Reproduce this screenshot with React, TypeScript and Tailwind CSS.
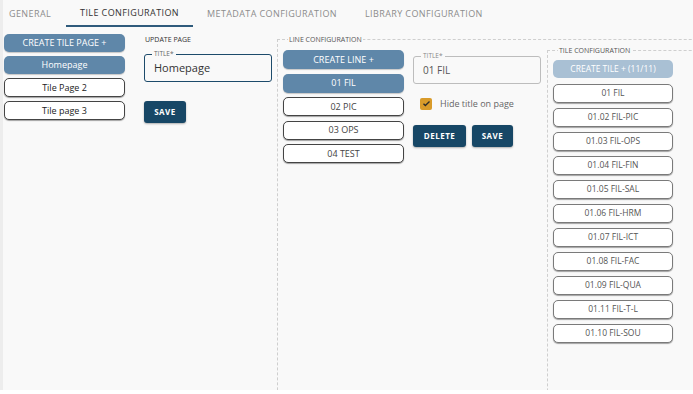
import React from "react";

const tabs = ["GENERAL", "TILE CONFIGURATION", "METADATA CONFIGURATION", "LIBRARY CONFIGURATION"];
const pages = ["Tile Page 2", "Tile page 3"];
const lines = ["02 PIC", "03 OPS", "04 TEST"];
const tiles = [
  "01 FIL",
  "01.02 FIL-PIC",
  "01.03 FIL-OPS",
  "01.04 FIL-FIN",
  "01.05 FIL-SAL",
  "01.06 FIL-HRM",
  "01.07 FIL-ICT",
  "01.08 FIL-FAC",
  "01.09 FIL-QUA",
  "01.11 FIL-T-L",
  "01.10 FIL-SOU",
];

const blueBtn =
  "flex items-center justify-center rounded-[5px] bg-[#5f87a9] text-white text-[9px] shadow-[0_1px_1px_rgba(0,0,0,0.2)]";
const whiteBtn =
  "flex items-center justify-center rounded-[5px] bg-white border border-[#444] shadow-[0_1px_1px_rgba(0,0,0,0.35)]";
const darkBtn =
  "flex items-center justify-center rounded-[3px] bg-[#174766] text-white text-[8px] font-bold tracking-[0.5px] shadow-[0_1px_2px_rgba(0,0,0,0.3)]";

const App: React.FC = () => {
  return (
    <div
      className="w-[693px] h-[394px] bg-white overflow-hidden"
      style={{ fontFamily: '"Open Sans", sans-serif' }}
    >
      <div className="h-[390px] bg-[#f9f9f9] border-l-[3px] border-[#ededed] overflow-hidden">
        {/* Tabs */}
        <div className="flex h-[28px] -ml-[3px]">
          {tabs.map((t, i) => (
            <div
              key={t}
              className={
                "shrink-0 h-[27px] flex items-center text-[9px] tracking-[0.4px] " +
                (i === 0 ? "pl-[9px] pr-[15px] " : "px-[14px] ") +
                (i === 1
                  ? "text-[#333] border-b-2 border-[#2f5b7c]"
                  : "text-[#8c8c8c]")
              }
            >
              {t}
            </div>
          ))}
        </div>

        <div className="flex pl-[1px]">
          {/* Pages column */}
          <div className="w-[121px] shrink-0 flex flex-col gap-[4px] mt-[6px]">
            <div className={blueBtn + " h-[18px]"}>CREATE TILE PAGE +</div>
            <div className={blueBtn + " h-[18px]"}>Homepage</div>
            {pages.map((p) => (
              <div key={p} className={whiteBtn + " h-[19px] text-[9px] text-[#222]"}>
                {p}
              </div>
            ))}
          </div>

          {/* Update page */}
          <div className="w-[128px] shrink-0 ml-[19px] mt-[7px]">
            <div className="text-[7px] text-[#333] leading-[9px] pl-[1px]">UPDATE PAGE</div>
            <div className="relative mt-[10px] h-[28px] rounded-[3px] border-[1.5px] border-[#1d4b6b] flex items-center pl-[9px]">
              <span className="absolute -top-[6px] left-[7px] px-[2px] bg-[#f9f9f9] text-[6.5px] leading-[9px] text-[#666]">
                TITLE*
              </span>
              <span className="text-[11px] text-[#333]">Homepage</span>
            </div>
            <div className={darkBtn + " mt-[19px] w-[42px] h-[22px]"}>SAVE</div>
          </div>

          {/* Line configuration */}
          <fieldset className="shrink-0 ml-[5px] mt-[7px] h-[420px] w-[480px] border border-dashed border-[#cfcfcf] pl-[5px] flex">
            <legend className="ml-[5px] px-[1px] text-[7px] leading-[9px] text-[#555]">
              LINE CONFIGURATION
            </legend>
            <div className="flex">
              <div className="w-[121px] shrink-0 flex flex-col gap-[4.5px] mt-[6px]">
                <div className={blueBtn + " h-[19px]"}>CREATE LINE +</div>
                <div className={blueBtn + " h-[19px]"}>01 FIL</div>
                {lines.map((l) => (
                  <div key={l} className={whiteBtn + " h-[19px] text-[9px] text-[#444]"}>
                    {l}
                  </div>
                ))}
              </div>

              <div className="w-[128px] shrink-0 ml-[9px] mt-[12px]">
                <div className="relative h-[28px] rounded-[3px] border border-[#bdbdbd] flex items-center pl-[9px]">
                  <span className="absolute -top-[6px] left-[7px] px-[2px] bg-[#f9f9f9] text-[6.5px] leading-[9px] text-[#888]">
                    TITLE*
                  </span>
                  <span className="text-[10px] text-[#555]">01 FIL</span>
                </div>
                <div className="flex items-center mt-[13px] ml-[7px]">
                  <div className="w-[12px] h-[12px] rounded-[2px] bg-[#d99b2a] flex items-center justify-center">
                    <svg width="9" height="9" viewBox="0 0 24 24" fill="none" stroke="#2b2b2b" strokeWidth="3.5">
                      <path d="M4 12.5l5 5L20 6.5" />
                    </svg>
                  </div>
                  <span className="ml-[8px] text-[9px] text-[#666]">Hide title on page</span>
                </div>
                <div className="flex gap-[6px] mt-[14px]">
                  <div className={darkBtn + " w-[53px] h-[22px]"}>DELETE</div>
                  <div className={darkBtn + " w-[41px] h-[22px]"}>SAVE</div>
                </div>
              </div>

              {/* Tile configuration */}
              <fieldset className="shrink-0 ml-[6px] mt-[2px] h-[420px] w-[170px] border border-dashed border-[#cfcfcf] pl-[5px]">
                <legend className="ml-[5px] px-[1px] text-[7px] leading-[9px] text-[#555]">
                  TILE CONFIGURATION
                </legend>
                <div className="w-[120px] flex flex-col gap-[5px] mt-[5px]">
                  <div className="h-[18px] mb-[1px] rounded-[5px] bg-[#a9c0d4] text-white text-[8.5px] flex items-center justify-center">
                    CREATE TILE + (11/11)
                  </div>
                  {tiles.map((t) => (
                    <div
                      key={t}
                      className="h-[19px] rounded-[5px] bg-white border border-[#7a7a7a] shadow-[0_1px_1px_rgba(0,0,0,0.35)] text-[8.5px] text-[#555] flex items-center justify-center"
                    >
                      {t}
                    </div>
                  ))}
                </div>
              </fieldset>
            </div>
          </fieldset>
        </div>
      </div>
    </div>
  );
};

export default App;
